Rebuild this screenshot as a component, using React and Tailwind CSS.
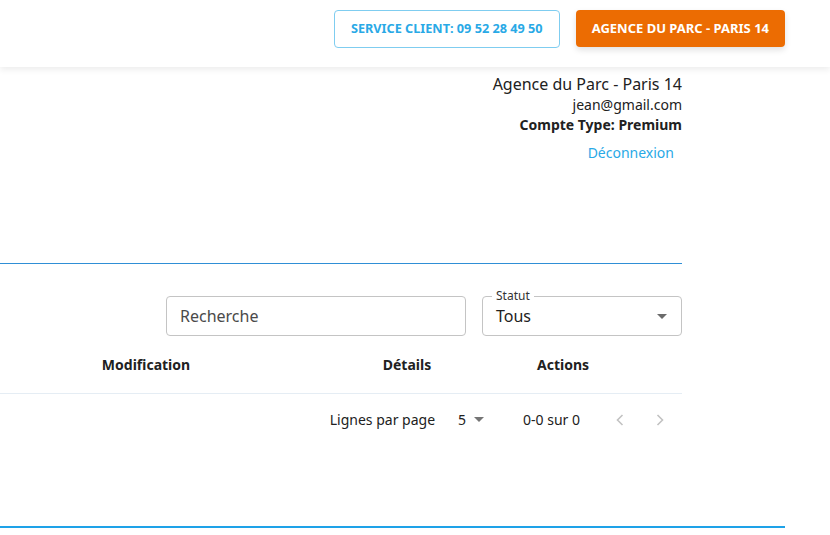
import React from 'react';

const font = { fontFamily: '"Noto Sans", "Open Sans", sans-serif' };

// --- Top bar with the two call-to-action buttons ---
const TopBar = () => (
    <header className="h-[67px] bg-white shadow-[0_3px_6px_rgba(0,0,0,0.07)] flex justify-end items-start pt-[10px] pr-[45px] gap-4 relative z-10">
        <button className="h-[38px] px-[16px] rounded-[4px] border border-[#7fcdf0] text-[#29a9e6] text-[12.7px] font-bold uppercase">
            Service client: 09 52 28 49 50
        </button>
        <button className="h-[37px] px-[16px] rounded-[4px] bg-[#ec6c02] text-white text-[13px] font-bold uppercase shadow-[0_3px_6px_rgba(0,0,0,0.12)]">
            Agence du Parc - Paris 14
        </button>
    </header>
);

// --- Account info in the top right corner ---
const AccountInfo = () => (
    <div className="flex flex-col items-end pt-[6px] text-[#212121]">
        <p className="text-[16px] leading-[22px]">Agence du Parc - Paris 14</p>
        <p className="text-[14px] leading-[20px]">jean@gmail.com</p>
        <p className="text-[14px] leading-[20px] font-bold">Compte Type: Premium</p>
        <button className="text-[14px] leading-[20px] text-[#29a9e6] px-2 pt-[8px] pb-[6px]">Déconnexion</button>
    </div>
);

const Filters = () => (
    <div className="flex justify-end gap-4 mt-[32px]">
        <div className="w-[300px] h-[40px] border border-[#c4c4c4] rounded-[4px] flex items-center px-[13px]">
            <span className="text-[16px] text-[#4a4a4a]">Recherche</span>
        </div>
        <div className="relative w-[200px] h-[40px] border border-[#c4c4c4] rounded-[4px] flex items-center justify-between pl-[13px] pr-[14px]">
            <span className="absolute -top-[9px] left-[9px] bg-white px-[4px] text-[12px] leading-[16px] text-[#333]">Statut</span>
            <span className="text-[16px] text-[#212121]">Tous</span>
            <svg width="10" height="5" viewBox="0 0 10 5"><path d="M0 0 L10 0 L5 5 Z" fill="#6b6b6b" /></svg>
        </div>
    </div>
);

const TableHead = () => (
    <div className="mt-[10px] grid grid-cols-[292px_230px_82px_1fr] h-[48px] pt-[9px] border-b border-[#e5edf4] text-[14px] leading-[20px] font-bold text-[#212121]">
        <span className="text-center">Modification</span>
        <span className="text-center">Détails</span>
        <span className="text-center">Actions</span>
        <span></span>
    </div>
);

const Pagination = () => (
    <div className="flex justify-end items-center h-[51px] text-[14px] text-[#212121] pr-[2px]">
        <span>Lignes par page</span>
        <span className="ml-[23px]">5</span>
        <svg className="ml-[8px]" width="10" height="5" viewBox="0 0 10 5"><path d="M0 0 L10 0 L5 5 Z" fill="#757575" /></svg>
        <span className="ml-[39px]">0-0 sur 0</span>
        <div className="ml-[20px] flex">
            <span className="w-[40px] h-[40px] flex items-center justify-center">
                <svg width="8" height="12" viewBox="0 0 8 12"><path d="M6.5 1 L1.5 6 L6.5 11" fill="none" stroke="#c2c2c2" strokeWidth="1.6" /></svg>
            </span>
            <span className="w-[40px] h-[40px] flex items-center justify-center">
                <svg width="8" height="12" viewBox="0 0 8 12"><path d="M1.5 1 L6.5 6 L1.5 11" fill="none" stroke="#c2c2c2" strokeWidth="1.6" /></svg>
            </span>
        </div>
    </div>
);

const App = () => {
    return (
        <div className="min-h-screen bg-white" style={font}>
            <TopBar />
            <main className="mr-[148px]">
                <AccountInfo />
                <div className="mt-[94px] h-px bg-[#2f8fd6]"></div>
                <Filters />
                <TableHead />
                <Pagination />
            </main>
            <div className="mt-[81px] mr-[45px] h-[2px] bg-[#1ea2e8]"></div>
        </div>
    );
};

export default App;
